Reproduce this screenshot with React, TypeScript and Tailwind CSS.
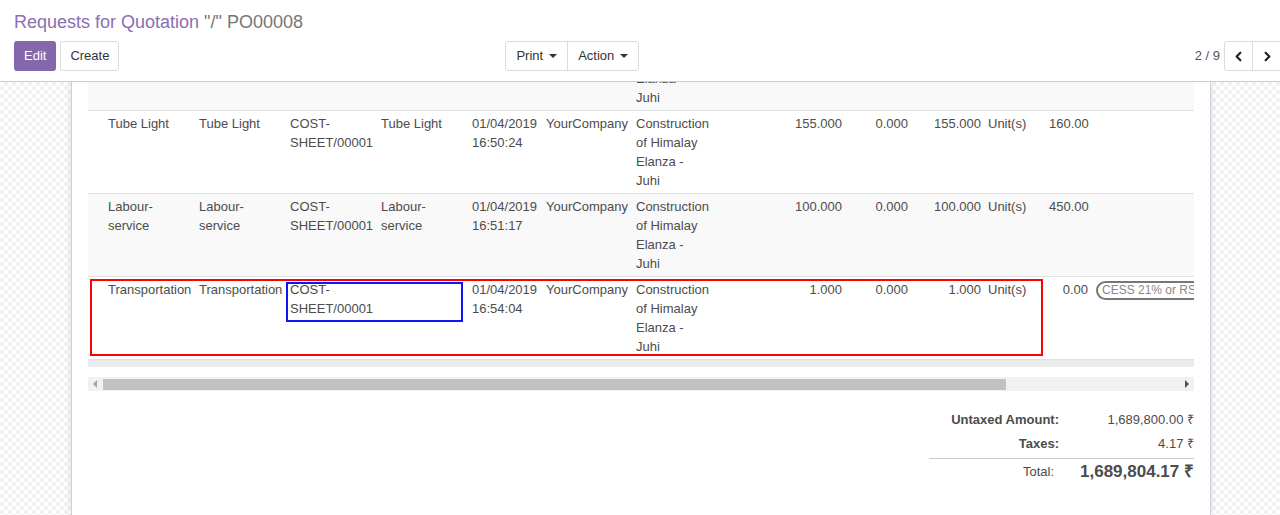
import React from 'react';
import { ChevronLeft, ChevronRight } from 'lucide-react';

type Line = {
  product: string[];
  description: string[];
  source: string[];
  name: string[];
  date: string[];
  company: string;
  analytic: string[];
  qty: string;
  disc: string;
  received: string;
  uom: string;
  price: string;
  tax?: string;
};

const lines: Line[] = [
  {
    product: [],
    description: [],
    source: [],
    name: [],
    date: [],
    company: '',
    analytic: ['Construction', 'of Himalay', 'Elanza -', 'Juhi'],
    qty: '',
    disc: '',
    received: '',
    uom: '',
    price: '',
  },
  {
    product: ['Tube Light'],
    description: ['Tube Light'],
    source: ['COST-', 'SHEET/00001'],
    name: ['Tube Light'],
    date: ['01/04/2019', '16:50:24'],
    company: 'YourCompany',
    analytic: ['Construction', 'of Himalay', 'Elanza -', 'Juhi'],
    qty: '155.000',
    disc: '0.000',
    received: '155.000',
    uom: 'Unit(s)',
    price: '160.00',
  },
  {
    product: ['Labour-', 'service'],
    description: ['Labour-', 'service'],
    source: ['COST-', 'SHEET/00001'],
    name: ['Labour-', 'service'],
    date: ['01/04/2019', '16:51:17'],
    company: 'YourCompany',
    analytic: ['Construction', 'of Himalay', 'Elanza -', 'Juhi'],
    qty: '100.000',
    disc: '0.000',
    received: '100.000',
    uom: 'Unit(s)',
    price: '450.00',
  },
  {
    product: ['Transportation'],
    description: ['Transportation'],
    source: ['COST-', 'SHEET/00001'],
    name: [],
    date: ['01/04/2019', '16:54:04'],
    company: 'YourCompany',
    analytic: ['Construction', 'of Himalay', 'Elanza -', 'Juhi'],
    qty: '1.000',
    disc: '0.000',
    received: '1.000',
    uom: 'Unit(s)',
    price: '0.00',
    tax: 'CESS 21% or RS. 400 Per Tonne',
  },
];

const Caret = () => (
  <span className="inline-block w-0 h-0 border-l-[4px] border-r-[4px] border-t-[4px] border-l-transparent border-r-transparent border-t-[#333]" />
);

const Stack = ({ items }: { items: string[] }) => (
  <>
    {items.map((t, i) => (
      <div key={i} className="whitespace-nowrap">
        {t}
      </div>
    ))}
  </>
);

const Row = ({ line, index }: { line: Line; index: number }) => {
  const striped = index % 2 === 0;
  return (
    <div
      className={`relative flex h-[83px] pt-[3px] border-b border-[#dee2e6] leading-[19px] ${
        striped ? 'bg-[#f9f9f9]' : 'bg-white'
      } ${index === 0 ? '-mt-[54px]' : ''}`}
    >
      <div className="w-[20px] shrink-0" />
      <div className="w-[91px] shrink-0"><Stack items={line.product} /></div>
      <div className="w-[91px] shrink-0"><Stack items={line.description} /></div>
      <div className="w-[91px] shrink-0"><Stack items={line.source} /></div>
      <div className="w-[91px] shrink-0"><Stack items={line.name} /></div>
      <div className="w-[74px] shrink-0"><Stack items={line.date} /></div>
      <div className="w-[90px] shrink-0 whitespace-nowrap">{line.company}</div>
      <div className="w-[100px] shrink-0"><Stack items={line.analytic} /></div>
      <div className="w-[106px] shrink-0 text-right">{line.qty}</div>
      <div className="w-[66px] shrink-0 text-right">{line.disc}</div>
      <div className="w-[73px] shrink-0 text-right">{line.received}</div>
      <div className="w-[68px] shrink-0 pl-[7px]">{line.uom}</div>
      <div className="w-[39px] shrink-0 text-right">{line.price}</div>
      <div className="shrink-0 pl-[8px]">
        {line.tax && (
          <span className="inline-block rounded-full border-2 border-[#777] px-[4px] text-[12px] leading-[15px] text-[#888] whitespace-nowrap">
            {line.tax}
          </span>
        )}
      </div>

      {/* Highlight boxes drawn on top of the last line */}
      {index === 3 && (
        <>
          <div className="absolute left-[2px] top-[2px] w-[953px] h-[77px] border-2 border-[#ff0000] pointer-events-none" />
          <div className="absolute left-[198px] top-[5px] w-[177px] h-[40px] border-2 border-[#1414f0] pointer-events-none" />
        </>
      )}
    </div>
  );
};

export default function App() {
  return (
    <div className="h-[515px] overflow-hidden flex flex-col bg-white font-['Liberation_Sans',Arial,sans-serif] text-[13px] text-[#4c4c4c]">
      {/* Control panel */}
      <header className="relative z-10 h-[82px] shrink-0 bg-white border-b border-[#cccccc] pl-[14px]">
        <div className="pt-[10px] text-[18px] leading-[24px] whitespace-nowrap">
          <span className="text-[#8a6fb3]">Requests for Quotation</span>
          <span className="text-[#777]"> "/" PO00008</span>
        </div>
        <div className="mt-[7px] flex items-center">
          <div className="flex gap-[4px]">
            <button className="h-[30px] px-[10px] rounded-[3px] bg-[#8468ac] text-white">Edit</button>
            <button className="h-[30px] px-[9px] rounded-[3px] border border-[#dcdcdc] bg-white text-[#333]">
              Create
            </button>
          </div>
          <div className="ml-[386px] flex h-[30px] rounded-[3px] border border-[#dcdcdc] text-[#333]">
            <button className="flex items-center gap-[6px] px-[10px] border-r border-[#dcdcdc]">
              Print <Caret />
            </button>
            <button className="flex items-center gap-[6px] px-[10px]">
              Action <Caret />
            </button>
          </div>
          <div className="ml-auto flex items-center">
            <span className="text-[#555] mr-[4px]">2 / 9</span>
            <div className="flex h-[30px] rounded-l-[3px] border border-[#dcdcdc] -mr-[2px]">
              <button className="w-[28px] flex items-center justify-center border-r border-[#dcdcdc] text-[#222]">
                <ChevronLeft size={15} strokeWidth={3.5} />
              </button>
              <button className="w-[28px] flex items-center justify-center text-[#222]">
                <ChevronRight size={15} strokeWidth={3.5} />
              </button>
            </div>
          </div>
        </div>
      </header>

      {/* Sheet background */}
      <div className="flex-1 bg-[image:repeating-conic-gradient(#f2f2f2_0%_25%,#ffffff_0%_50%)] bg-size-[8px_8px]">
        <div className="ml-[71px] w-[1140px] h-full bg-white border-l border-[#cfcfcf] border-r border-r-[#d3cfe0] shadow-[0_0_8px_rgba(0,0,0,0.12)] px-[16px]">
          {/* Lines table */}
          <div className="overflow-hidden">
            <div className="w-[1200px]">
              {lines.map((line, i) => (
                <Row key={i} line={line} index={i} />
              ))}
            </div>
          </div>
          <div className="h-[7px] bg-[#ebebeb]" />

          {/* Horizontal scrollbar */}
          <div className="mt-[10px] h-[14px] bg-[#f1f1f1] flex items-center relative">
            <span className="absolute left-[5px] top-[3px] w-0 h-0 border-t-[4px] border-b-[4px] border-r-[4px] border-t-transparent border-b-transparent border-r-[#a3a3a3]" />
            <div className="absolute left-[15px] top-[2px] w-[903px] h-[11px] bg-[#c1c1c1]" />
            <span className="absolute right-[5px] top-[3px] w-0 h-0 border-t-[4px] border-b-[4px] border-l-[4px] border-t-transparent border-b-transparent border-l-[#505050]" />
          </div>

          {/* Totals */}
          <div className="mt-[17px] flex justify-end">
            <div className="w-[265px]">
              <div className="flex leading-[24px]">
                <div className="w-[130px] text-right font-bold">Untaxed Amount:</div>
                <div className="w-[135px] text-right">1,689,800.00 ₹</div>
              </div>
              <div className="flex leading-[24px]">
                <div className="w-[130px] text-right font-bold">Taxes:</div>
                <div className="w-[135px] text-right">4.17 ₹</div>
              </div>
              <div className="mt-[2px] border-t border-[#cccccc] flex items-center h-[26px]">
                <div className="w-[130px] text-right pr-[5px]">Total:</div>
                <div className="w-[135px] text-right text-[17px] font-bold">1,689,804.17 ₹</div>
              </div>
            </div>
          </div>
        </div>
      </div>
    </div>
  );
}
